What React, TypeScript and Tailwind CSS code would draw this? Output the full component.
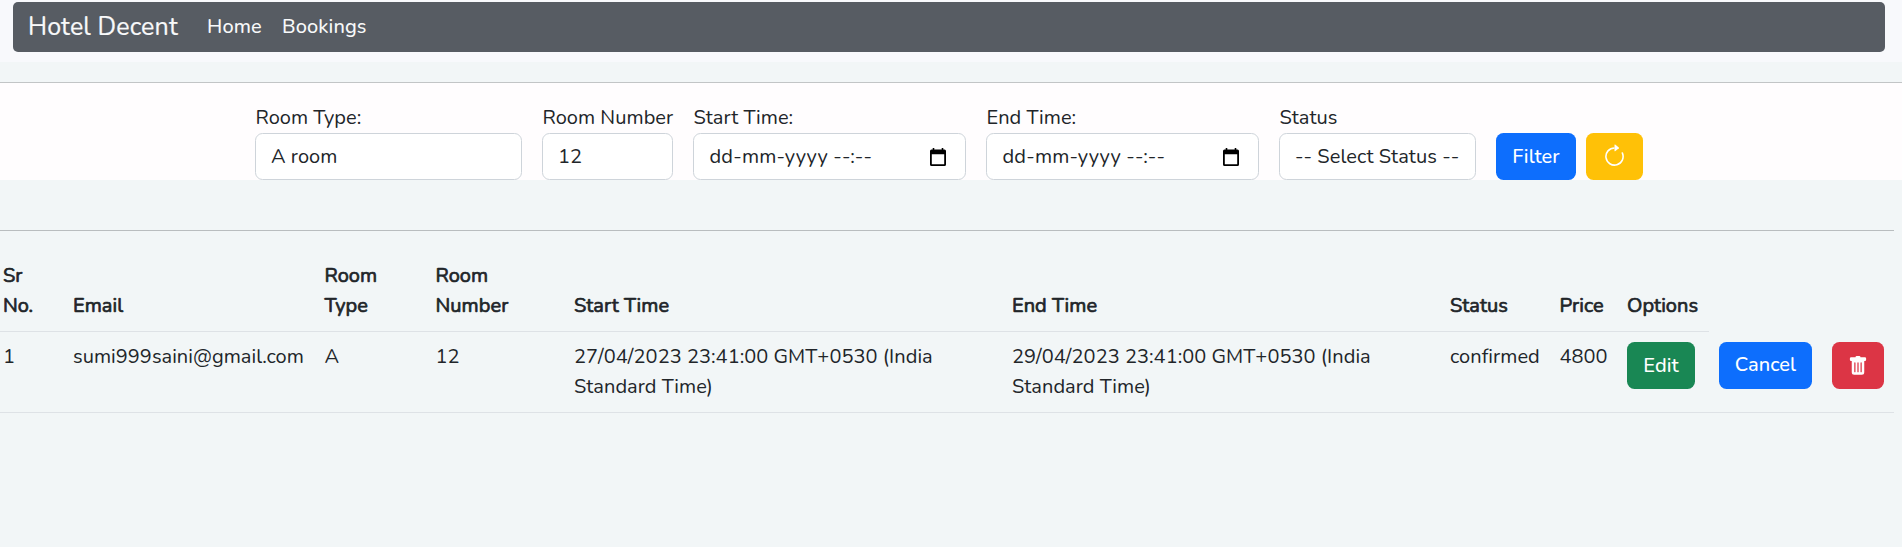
import type { ReactNode } from "react";
import { BsArrowClockwise, BsTrashFill } from "react-icons/bs";

const control =
  "flex h-[47px] items-center rounded-[7.5px] border border-[#ced4da] bg-white px-[15px] whitespace-nowrap";

function Field({ label, className, children }: { label: string; className: string; children: ReactNode }) {
  return (
    <div className={className}>
      <label className="block h-[30px] pl-[0.5px] whitespace-nowrap">{label}</label>
      <div className={control}>{children}</div>
    </div>
  );
}

function CalendarIcon() {
  return (
    <svg className="ml-auto mr-[4px] h-[18px] w-[16px]" viewBox="0 0 16 18" fill="none">
      <path d="M3.5 0v3M12.5 0v3" stroke="#000" strokeWidth="1.6" />
      <path d="M1.5 1.5h13a1.5 1.5 0 0 1 1.5 1.5v13.5a1.5 1.5 0 0 1-1.5 1.5h-13A1.5 1.5 0 0 1 0 16.5V3a1.5 1.5 0 0 1 1.5-1.5zM1.8 6.3v9.9h12.4V6.3z" fill="#000" fillRule="evenodd" />
    </svg>
  );
}

function DateTime() {
  return (
    <>
      <span className="pl-[0.5px] tracking-[0.2px]">dd-mm-yyyy --:--</span>
      <CalendarIcon />
    </>
  );
}

const columns: { title: string; width: string }[] = [
  { title: "Sr No.", width: "w-[63px]" },
  { title: "Email", width: "w-[252px]" },
  { title: "Room Type", width: "w-[111px]" },
  { title: "Room Number", width: "w-[138px]" },
  { title: "Start Time", width: "w-[438px]" },
  { title: "End Time", width: "w-[438px]" },
  { title: "Status", width: "w-[109.5px]" },
  { title: "Price", width: "w-[67.5px]" },
  { title: "Options", width: "w-[92px]" },
];

const cells = [
  "1",
  "sumi999saini@gmail.com",
  "A",
  "12",
  "27/04/2023 23:41:00 GMT+0530 (India Standard Time)",
  "29/04/2023 23:41:00 GMT+0530 (India Standard Time)",
  "confirmed",
  "4800",
];

const button = "flex h-[47px] items-center justify-center rounded-[7.5px] text-white";

export default function App() {
  return (
    <div className="h-[547px] overflow-hidden bg-[#f2f6f7] font-[Nunito,Lato,sans-serif] text-[20px] leading-[30px] tracking-[0.04px] text-[#212529]">
      <header className="h-[62px] bg-[#f8f9fc] pt-[2px] pr-[17px] pl-[13px]">
        <nav className="flex h-[50px] items-center rounded-[5px] bg-[#575c63] pl-[15px] text-[#f8f9fa]">
          <a className="w-[179px] text-[25px] tracking-[0.15px] [-webkit-text-stroke:0.2px_#f8f9fa]">Hotel Decent</a>
          <a className="w-[75px] tracking-[0.1px] font-medium">Home</a>
          <a className="tracking-[0.1px] font-medium">Bookings</a>
        </nav>
      </header>
      <div className="h-[20px]" />
      <hr className="border-[#c2c5c6]" />
      <form className="flex h-[97px] items-end bg-[#fffdfe] pl-[255px]">
        <Field label="Room Type:" className="w-[267px]">A room</Field>
        <Field label="Room Number" className="ml-[20px] w-[131px]">12</Field>
        <Field label="Start Time:" className="ml-[20px] w-[273px]"><DateTime /></Field>
        <Field label="End Time:" className="ml-[20px] w-[273px]"><DateTime /></Field>
        <Field label="Status" className="ml-[20px] w-[197px]"><span className="tracking-[0.08px]">-- Select Status --</span></Field>
        <button type="button" className={`${button} ml-[20px] w-[80px] bg-[#0d6efd] font-medium`}>Filter</button>
        <button type="button" className={`${button} ml-[10px] w-[57px] bg-[#ffc107]`}>
          <BsArrowClockwise size={25} />
        </button>
      </form>
      <div className="h-[50px]" />
      <hr className="w-[1894px] border-[#b9bdbf]" />
      <table className="mt-[18px] w-[1894px] table-fixed border-collapse text-left">
        <thead>
          <tr className="h-[82px]">
            {columns.map((c, i) => (
              <th
                key={c.title}
                className={`${c.width} ${i === 0 ? "pl-[3px] pr-[20px]" : i === 2 ? "pl-[9.5px] pr-[40px]" : i === 3 ? "pl-[9.5px] pr-[40px]" : "pl-[10px]"} border-b border-[#dee2e6] pb-[10px] align-bottom font-normal [-webkit-text-stroke:0.7px_#212529]`}
              >
                {c.title}
              </th>
            ))}
            <th className="w-[113px]" />
            <th className="w-[72px]" />
          </tr>
        </thead>
        <tbody>
          <tr className="h-[81px] border-b border-[#dee2e6] align-top">
            {cells.map((text, i) => (
              <td key={i} className={`${i === 0 ? "pl-[3px]" : i === 2 || i === 3 ? "pl-[9.5px]" : "pl-[10px]"} ${i === 4 || i === 5 ? "pr-[10px]" : ""} pt-[10px]`}>
                {text}
              </td>
            ))}
            <td className="pt-[10px] pl-[10px]">
              <button type="button" className={`${button} w-[68px] bg-[#198754] pt-[2px] font-medium`}>Edit</button>
            </td>
            <td className="pt-[11px] pl-[10px]">
              <button type="button" className={`${button} w-[93px] bg-[#0d6efd] pb-[2px] font-medium`}>Cancel</button>
            </td>
            <td className="pt-[11px] pl-[10px]">
              <button type="button" className={`${button} w-[52px] bg-[#dc3545]`}>
                <BsTrashFill size={20} />
              </button>
            </td>
          </tr>
        </tbody>
      </table>
    </div>
  );
}
